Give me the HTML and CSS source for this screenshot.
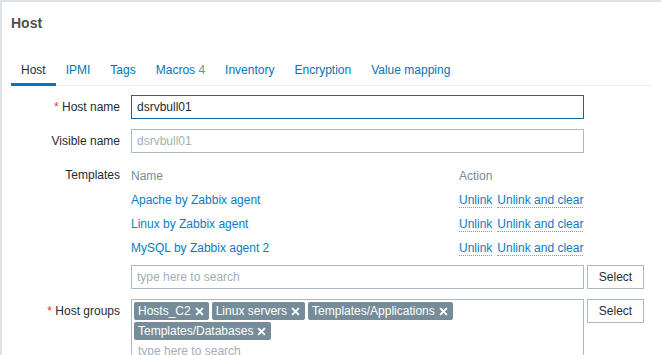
FILE: index.html
```html
<!DOCTYPE html>
<html>
	<head>
		<meta charset="UTF-8">
		<title>Host</title>
		<link rel="stylesheet" href="styles.css">
	</head>
	<body>
		<div class="dialog">
			<div class="dialog-head">
				<h4>Host</h4>
			</div>
			<div class="dialog-body">
				<ul class="tabs">
					<li class="active">Host</li>
					<li>IPMI</li>
					<li>Tags</li>
					<li>Macros <span class="count">4</span></li>
					<li>Inventory</li>
					<li>Encryption</li>
					<li>Value mapping</li>
				</ul>
				<div class="form">
					<div class="row">
						<label class="label"><span class="req">*</span> Host name</label>
						<input type="text" class="field focus" value="dsrvbull01">
					</div>
					<div class="row">
						<label class="label">Visible name</label>
						<input type="text" class="field" placeholder="dsrvbull01">
					</div>
					<div class="row top">
						<label class="label">Templates</label>
						<div class="field-wrap">
							<table class="tpl">
								<tr class="tpl-head">
									<td class="col-name">Name</td>
									<td>Action</td>
								</tr>
								<tr>
									<td class="col-name"><a href="#">Apache by Zabbix agent</a></td>
									<td><a href="#" class="dotted">Unlink</a><a href="#" class="dotted second">Unlink and clear</a></td>
								</tr>
								<tr>
									<td class="col-name"><a href="#">Linux by Zabbix agent</a></td>
									<td><a href="#" class="dotted">Unlink</a><a href="#" class="dotted second">Unlink and clear</a></td>
								</tr>
								<tr>
									<td class="col-name"><a href="#">MySQL by Zabbix agent 2</a></td>
									<td><a href="#" class="dotted">Unlink</a><a href="#" class="dotted second">Unlink and clear</a></td>
								</tr>
							</table>
							<div class="search-row">
								<input type="text" class="field" placeholder="type here to search">
								<button class="btn">Select</button>
							</div>
						</div>
					</div>
					<div class="row top">
						<label class="label"><span class="req">*</span> Host groups</label>
						<div class="multi">
							<div class="tags">
								<span class="tag">Hosts_C2<svg viewBox="0 0 8 8"><path d="M1 1L7 7M7 1L1 7"/></svg></span>
								<span class="tag">Linux servers<svg viewBox="0 0 8 8"><path d="M1 1L7 7M7 1L1 7"/></svg></span>
								<span class="tag">Templates/Applications<svg viewBox="0 0 8 8"><path d="M1 1L7 7M7 1L1 7"/></svg></span>
								<span class="tag">Templates/Databases<svg viewBox="0 0 8 8"><path d="M1 1L7 7M7 1L1 7"/></svg></span>
							</div>
							<input type="text" class="multi-input" placeholder="type here to search">
						</div>
						<button class="btn">Select</button>
					</div>
				</div>
			</div>
		</div>
	</body>
</html>
```

FILE: styles.css
```css
*{
	margin:0;
	padding:0;
	box-sizing: border-box;
}
body{
	background: #fff;
	font-family: "Liberation Sans", Arial, sans-serif;
	font-size: 12px;
	color: #1f2c33;
}
.dialog{
	border-top: 2px solid #dce2e6;
	border-left: 2px solid #dce2e6;
	height: 355px;
	overflow: hidden;
}
.dialog-head{
	padding: 13px 9px 0;
	height: 54px;
}
.dialog-head h4{
	font-size: 14px;
	line-height: 16px;
	font-weight: bold;
	color: #4f4f4f;
}
.dialog-body{
	padding: 0 9px;
}
.tabs{
	display: flex;
	list-style: none;
	border-bottom: 1px solid #ebeef0;
	height: 30px;
}
.tabs li{
	padding: 0 10px;
	line-height: 28px;
	height: 30px;
	border-bottom: 3px solid transparent;
	color: #0275b8;
	margin-bottom: -1px;
	white-space: nowrap;
}
.tabs li.active{
	color: #1f2c33;
	border-bottom-color: #0275b8;
}
.tabs .count{
	color: #768d99;
}
.form{
	padding-top: 9px;
}
.row{
	display: flex;
	align-items: center;
	margin-bottom: 10px;
}
.row.top{
	align-items: flex-start;
}
.label{
	width: 109px;
	margin-right: 11px;
	text-align: right;
	line-height: 24px;
	white-space: nowrap;
}
.req{
	color: #e33734;
}
.field{
	width: 453px;
	height: 24px;
	border: 1px solid #acbbc2;
	padding: 0 5px;
	font-family: "Liberation Sans", Arial, sans-serif;
	font-size: 12px;
	color: #1f2c33;
	outline: none;
	background: #fff;
}
.field.focus{
	border-color: #0b67a6;
}
.field::placeholder,
.multi-input::placeholder{
	color: #a3afb6;
}
.tpl{
	width: 453px;
	border-collapse: collapse;
	table-layout: fixed;
	margin-top: 1px;
}
.tpl td{
	height: 24px;
	padding: 0;
	vertical-align: middle;
	white-space: nowrap;
}
.tpl .col-name{
	width: 328px;
}
.tpl-head td{
	color: #768d99;
}
.tpl a{
	color: #0a7cc0;
	text-decoration: none;
}
.tpl a.dotted{
	border-bottom: 1px dotted #5fa8d6;
}
.tpl a.second{
	margin-left: 5px;
}
.search-row{
	display: flex;
	margin-top: 5px;
}
.btn{
	width: 57px;
	height: 24px;
	margin-left: 3px;
	border: 1px solid #acbbc2;
	background: #fff;
	font-family: "Liberation Sans", Arial, sans-serif;
	font-size: 12px;
	color: #1f2c33;
}
.multi{
	width: 453px;
	height: 80px;
	border: 1px solid #acbbc2;
	padding: 2px 2px 0;
}
.tags{
	display: flex;
	flex-wrap: wrap;
	gap: 2px 3px;
}
.tag{
	display: flex;
	align-items: center;
	height: 18px;
	padding: 0 5px 0 4px;
	background: #768d99;
	color: #fff;
	border-radius: 2px;
	line-height: 18px;
	white-space: nowrap;
}
.tag svg{
	width: 9px;
	height: 9px;
	margin-left: 4px;
	stroke: #fff;
	stroke-width: 1.8;
	fill: none;
}
.multi-input{
	display: block;
	width: 100%;
	height: 22px;
	border: none;
	outline: none;
	padding: 0 4px;
	font-family: "Liberation Sans", Arial, sans-serif;
	font-size: 12px;
}
```
